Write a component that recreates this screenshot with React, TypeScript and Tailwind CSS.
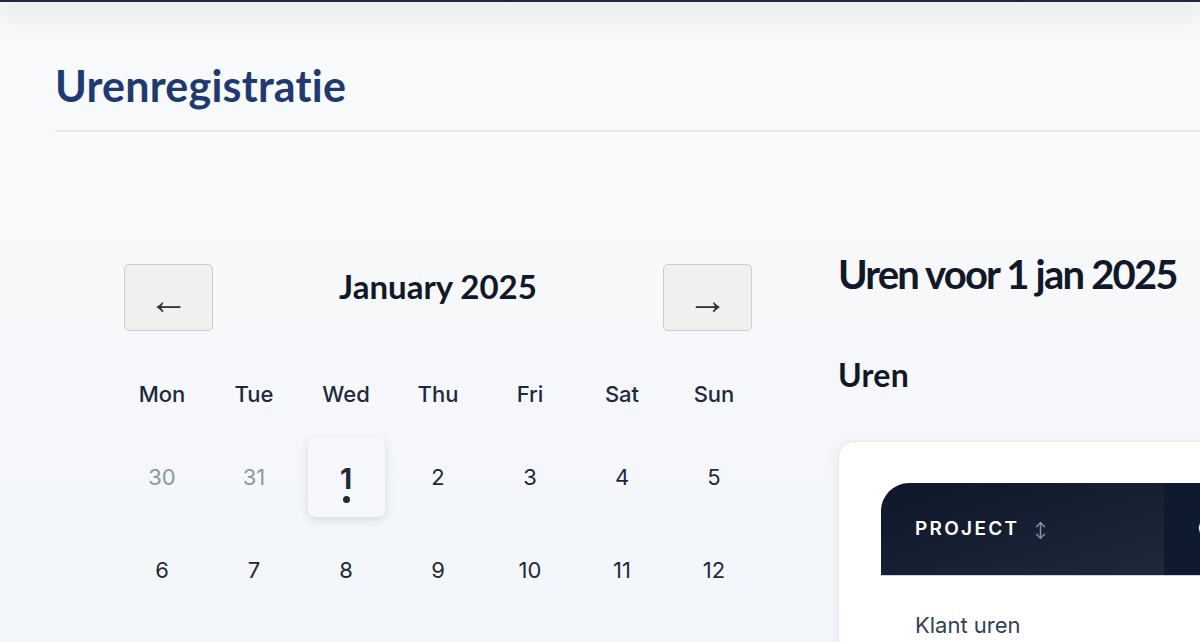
import React from "react";

const weekDays = ["Mon", "Tue", "Wed", "Thu", "Fri", "Sat", "Sun"];

const days = [
  { n: 30, muted: true },
  { n: 31, muted: true },
  { n: 1, selected: true },
  { n: 2 },
  { n: 3 },
  { n: 4 },
  { n: 5 },
  { n: 6 },
  { n: 7 },
  { n: 8 },
  { n: 9 },
  { n: 10 },
  { n: 11 },
  { n: 12 },
];

function Calendar() {
  return (
    <div className="ml-[61px] w-[644px] shrink-0 pt-[14px]">
      <div className="flex items-start justify-between px-2">
        <button className="flex h-[67px] w-[89px] items-center justify-center rounded-[5px] border border-[#cdcdcd] bg-[#f0f0f0] pt-[4px] font-['Liberation_Sans',sans-serif] text-[40px] leading-none text-[#333]">
          ←
        </button>
        <h2 className="font-['Lato',sans-serif] text-[33px] font-bold leading-[44px] text-[#111827]">
          January 2025
        </h2>
        <button className="flex h-[67px] w-[89px] items-center justify-center rounded-[5px] border border-[#cdcdcd] bg-[#f0f0f0] pt-[4px] font-['Liberation_Sans',sans-serif] text-[40px] leading-none text-[#333]">
          →
        </button>
      </div>

      <div className="mt-[40px] grid h-[46px] grid-cols-7 items-center text-center text-[22px] font-medium text-[#1e293b]">
        {weekDays.map((d) => (
          <div key={d}>{d}</div>
        ))}
      </div>

      <div className="mt-[14px] grid auto-rows-[93px] grid-cols-7">
        {days.map((d) => (
          <div key={d.n} className="flex items-center justify-center">
            {d.selected ? (
              <div className="flex h-[79px] w-[77px] flex-col items-center justify-center rounded-[7px] bg-[#f6f8fb] pt-[14px] shadow-[0_3px_10px_rgba(15,23,42,0.13)]">
                <span className="text-[28px] font-bold leading-[24px] text-[#1e293b]">{d.n}</span>
                <span className="mt-[5px] h-[7px] w-[7px] rounded-full bg-[#1e293b]" />
              </div>
            ) : (
              <span className={`text-[22px] ${d.muted ? "text-[#8d97a3]" : "text-[#1e293b]"}`}>{d.n}</span>
            )}
          </div>
        ))}
      </div>
    </div>
  );
}

function HoursPanel() {
  return (
    <div className="ml-[78px] w-[560px] shrink-0">
      <h2 className="font-['Lato',sans-serif] text-[40px] font-bold leading-[48px] tracking-[-0.045em] text-[#111827]">
        Uren voor 1 jan 2025
      </h2>
      <h3 className="mt-[59px] font-['Lato',sans-serif] text-[32px] font-bold leading-[36px] tracking-[0.01em] text-[#111827]">
        Uren
      </h3>

      <div className="mt-[48px] rounded-[16px] border border-[#e2e8f0] bg-white px-[42px] pt-[41px] pb-10 shadow-[-4px_0_14px_rgba(15,23,42,0.03)]">
        <table className="w-full table-fixed border-collapse text-left">
          <colgroup>
            <col className="w-[283px]" />
            <col />
          </colgroup>
          <thead>
            <tr className="h-[92px] border-b border-[#cbd5e1]">
              <th className="rounded-tl-[28px] bg-gradient-to-br from-[#0f172a] to-[#1e293b] pl-[34px] text-[19px] font-semibold tracking-[0.12em] text-white">
                PROJECT <span className="ml-2 text-[15px] font-normal tracking-normal text-[#94a3b8]">↕</span>
              </th>
              <th className="bg-[#101a2e] pl-[34px] text-[19px] font-semibold tracking-[0.12em] text-white">CATEGORIE</th>
            </tr>
          </thead>
          <tbody>
            <tr className="h-[92px] align-top">
              <td className="pl-[34px] pt-[33px] text-[22px] text-[#334155]">Klant uren</td>
              <td className="pl-[36px] pt-[33px] text-[22px] text-[#94a3b8]">Intern</td>
            </tr>
          </tbody>
        </table>
      </div>
    </div>
  );
}

export default function App() {
  return (
    <div className="h-screen w-full overflow-hidden bg-gradient-to-b from-[#f9fafb] to-[#f3f6fa] font-['Inter',sans-serif]">
      <div className="relative z-10 h-[2px] bg-[#1e293b] shadow-[0_4px_30px_6px_rgba(0,0,0,0.13)]" />
      <main className="pl-[55px] pt-[60px]">
        <h1 className="font-['Lato',sans-serif] text-[43px] font-bold leading-[48px] tracking-[0.005em] text-[#1e3a70]">
          Urenregistratie
        </h1>
        <div className="mt-[20px] h-[2px] bg-[#e8eaed]" />
        <div className="mt-[118px] flex items-start">
          <Calendar />
          <HoursPanel />
        </div>
      </main>
    </div>
  );
}
